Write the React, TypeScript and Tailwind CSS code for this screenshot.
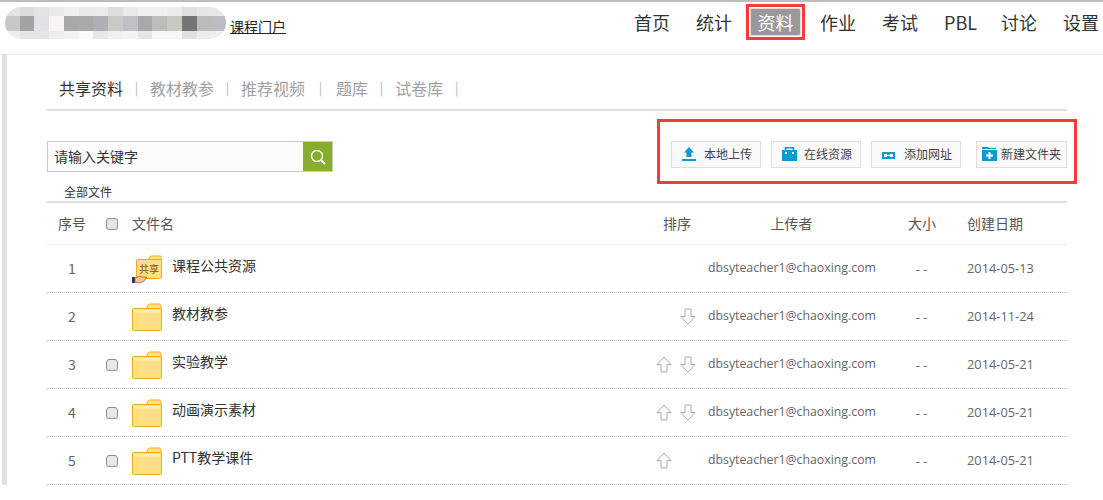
import React from 'react';

const FONT = "font-['Microsoft_YaHei','Noto_Sans_CJK_SC','Noto_Sans',sans-serif]";

const NAV = ['首页', '统计', '资料', '作业', '考试', 'PBL', '讨论', '设置'];

const LOGO_ROWS = [
  ['#e4e4e4', '#dcdcdc', '#e4e4e2', '#e9eaec', '#f0f0ee', '#eaeae8', '#ebebed', '#dedede', '#e8e9eb', '#f0f0f0', '#f0f0f0', '#ececec', '#e0e0e0', '#e6e6e6', '#e6e8e8'],
  ['#c8c8c6', '#a2a3a5', '#e2e2e4', '#f6f5f1', '#a8a8a6', '#a9a9a5', '#adb0b5', '#cac9c7', '#bfc1c4', '#a8aaa9', '#bcbcb8', '#c8c8c4', '#757575', '#bcbbb7', '#babdc0'],
  ['#eeeeee', '#e6e6e6', '#e5e5e3', '#eceeee', '#f2f2f2', '#fafbfb', '#e6e8e8', '#f0f0f0', '#f2f3f2', '#e5e5e5', '#f6f6f6', '#f6f6f6', '#e0e0e0', '#ececec', '#f0f0f0'],
];

const ROWS = [
  { no: 1, name: '课程公共资源', check: false, up: false, down: false, date: '2014-05-13', shared: true },
  { no: 2, name: '教材教参', check: false, up: false, down: true, date: '2014-11-24', shared: false },
  { no: 3, name: '实验教学', check: true, up: true, down: true, date: '2014-05-21', shared: false },
  { no: 4, name: '动画演示素材', check: true, up: true, down: true, date: '2014-05-21', shared: false },
  { no: 5, name: 'PTT教学课件', check: true, up: true, down: false, date: '2014-05-21', shared: false },
];

const Logo = () => (
  <div className="flex flex-col w-[221px] h-[32px] rounded-[16px] overflow-hidden">
    {LOGO_ROWS.map((row, i) => (
      <div key={i} className={i === 1 ? 'flex h-[15px]' : 'flex h-[8.5px]'}>
        {row.map((c, j) => (
          <div key={j} className="flex-1" style={{ backgroundColor: c }} />
        ))}
      </div>
    ))}
  </div>
);

const Folder = () => (
  <svg width="30" height="28" viewBox="0 0 30 28">
    <path d="M15 3.5 L17 1 H27.5 Q29 1 29 2.5 V6 H15 Z" fill="#ffe08a" stroke="#f0ad12" />
    <path d="M1.5 5.5 H28 Q29.5 5.5 29.5 7 V26 Q29.5 27.5 28 27.5 H2 Q0.5 27.5 0.5 26 V6.5 Q0.5 5.5 1.5 5.5 Z" fill="#ffdf85" stroke="#f0ad12" />
    <path d="M2 7 H28 V10 H2 Z" fill="#ffeaa8" />
  </svg>
);

const SharedFolder = () => (
  <div className="relative w-[30px] h-[28px]">
    <svg className="absolute left-[4px] top-0" width="26" height="24" viewBox="0 0 26 24">
      <path d="M13 3 L15 1 H24 Q25.5 1 25.5 2.5 V5 H13 Z" fill="#ffe08a" stroke="#f0ad12" />
      <path d="M1.5 4.5 H24.5 Q25.5 4.5 25.5 5.5 V22.5 Q25.5 23.5 24.5 23.5 H1.5 Q0.5 23.5 0.5 22.5 V5.5 Q0.5 4.5 1.5 4.5 Z" fill="#ffdf85" stroke="#f0ad12" />
    </svg>
    <span className="absolute left-[7px] top-[7px] text-[10px] leading-[14px] text-[#8a4a12]">共享</span>
    <svg className="absolute left-0 top-[20px]" width="16" height="9" viewBox="0 0 16 9">
      <rect x="0" y="2" width="3" height="6" fill="#2b3560" />
      <path d="M3 3 Q7 0 10 2 L15 2 Q12 8 7 8 L3 7 Z" fill="#f3c4a0" stroke="#b5562b" strokeWidth="0.8" />
    </svg>
  </div>
);

const ArrowUp = () => (
  <svg width="16" height="17" viewBox="0 0 16 17" fill="#fff" stroke="#aaaaaa" strokeWidth="1">
    <path d="M8 1 L15 8.5 H11 V16 H5 V8.5 H1 Z" />
  </svg>
);

const ArrowDown = () => (
  <svg width="16" height="17" viewBox="0 0 16 17" fill="#fff" stroke="#aaaaaa" strokeWidth="1">
    <path d="M5 1 H11 V8.5 H15 L8 16 L1 8.5 H5 Z" />
  </svg>
);

const Checkbox = () => (
  <span className="block w-[12px] h-[12px] rounded-[3px] border border-[#8f8f8f] bg-[#e6e6e6]" />
);

const UploadIcon = () => (
  <svg width="14" height="14" viewBox="0 0 14 14" fill="#0a9ccf">
    <path d="M7 0 L12 5.5 H9.5 V10 H4.5 V5.5 H2 Z" />
    <rect x="0" y="12" width="14" height="2" />
  </svg>
);

const BagIcon = () => (
  <svg width="15" height="14" viewBox="0 0 15 14">
    <path d="M0 3 H15 V14 H0 Z" fill="#0a9ccf" />
    <path d="M3.5 3 V0.8 H11.5 V3" fill="none" stroke="#0a9ccf" strokeWidth="1.6" />
    <rect x="3" y="5" width="2" height="2" fill="#fff" />
    <rect x="10" y="5" width="2" height="2" fill="#fff" />
  </svg>
);

const LinkIcon = () => (
  <svg className="mt-[3px]" width="13" height="7" viewBox="0 0 13 7">
    <rect width="13" height="7" fill="#0a9ccf" />
    <rect x="2" y="2" width="3" height="3" fill="#fff" />
    <rect x="8" y="2" width="3" height="3" fill="#fff" />
    <rect x="5" y="3" width="3" height="1" fill="#fff" />
  </svg>
);

const NewFolderIcon = () => (
  <svg width="15" height="14" viewBox="0 0 15 14" fill="#0a9ccf">
    <path d="M0 0 H6 L7 1 H14 V2 H0 Z" />
    <rect y="3" width="15" height="11" />
    <rect x="6.5" y="5" width="2" height="7" fill="#fff" />
    <rect x="4" y="7.5" width="7" height="2" fill="#fff" />
  </svg>
);

const ActionButton = ({ icon, label, className }: { icon: React.ReactNode; label: string; className: string }) => (
  <button className={`h-[27px] flex items-center border border-[#dedede] bg-[#fafafa] text-[12px] text-[#444] ${className}`}>
    {icon}
    <span>{label}</span>
  </button>
);

const App: React.FC = () => {
  return (
    <div className={`w-[1103px] h-[500px] overflow-hidden bg-white border-t-2 border-[#bdbdbd] ${FONT}`}>
      <header className="h-[53px] border-b border-[#e2e2e2] flex items-start pl-[5px]">
        <div className="mt-[5px]"><Logo /></div>
        <a className="mt-[15px] ml-[4px] text-[14px] leading-[18px] text-[#222] underline">课程门户</a>
        <nav className="ml-auto flex items-center h-[36px] mt-[2px] text-[18px] text-[#333] mr-[4px]">
          {NAV.map(item =>
            item === '资料' ? (
              <span key={item} className="w-[59px] h-[36px] border-[3px] border-[#f63b3b] flex items-center justify-center mr-[15px]">
                <span className="w-[51px] h-[28px] bg-[#999] border border-[#ddd] rounded-[2px] text-white leading-[26px] text-center">{item}</span>
              </span>
            ) : (
              <span
                key={item}
                className={item === '统计' ? 'mr-[14px]' : item === '设置' ? '' : item === 'PBL' ? 'w-[31px] mr-[26px] whitespace-nowrap' : 'mr-[26px]'}
              >
                {item}
              </span>
            ),
          )}
        </nav>
      </header>

      <main className="border-l-[5px] border-[#e2e2e2] ml-[2px] pl-[40px] w-[1020px] box-content">
        <div className="h-[56px] border-b-2 border-[#dcdcdc] flex items-center pt-[11px] pl-[12px] text-[16px] text-[#a0a0a0]">
          <span className="text-[#333]">共享资料</span>
          <span className="mx-[11.75px] text-[13px] text-[#b5b5b5]">|</span>
          <span>教材教参</span>
          <span className="mx-[11.75px] text-[13px] text-[#b5b5b5]">|</span>
          <span>推荐视频</span>
          <span className="mx-[13.75px] text-[13px] text-[#b5b5b5]">|</span>
          <span>题库</span>
          <span className="mx-[11.75px] text-[13px] text-[#b5b5b5]">|</span>
          <span>试卷库</span>
          <span className="mx-[11.75px] text-[13px] text-[#b5b5b5]">|</span>
        </div>

        <div className="flex justify-between items-start mt-[8px] h-[65px] mr-[-10px]">
          <div className="flex w-[286px] h-[31px] mt-[22px] border border-[#cccccc]">
            <div className="flex-1 bg-[#fcfcfc] text-[14px] leading-[29px] pl-[6px] text-[#333]">请输入关键字</div>
            <div className="w-[29px] bg-[#86ad2e] flex items-center justify-center">
              <svg width="18" height="18" viewBox="0 0 18 18" fill="none" stroke="#fff">
                <circle cx="8" cy="8" r="5.5" strokeWidth="1.4" />
                <path d="M12 12 L16 16" strokeWidth="2" />
              </svg>
            </div>
          </div>
          <div className="w-[420px] h-[65px] border-[3px] border-[#f63b3b] flex items-center pl-[11px] pt-[5px]">
            <ActionButton className="w-[90px] pl-[10px] gap-[8px]" icon={<UploadIcon />} label="本地上传" />
            <ActionButton className="w-[90px] ml-[10px] pl-[10px] gap-[7px]" icon={<BagIcon />} label="在线资源" />
            <ActionButton className="w-[90px] ml-[10px] pl-[10px] gap-[9px]" icon={<LinkIcon />} label="添加网址" />
            <ActionButton className="w-[91px] ml-[15px] pl-[5px] gap-[4px]" icon={<NewFolderIcon />} label="新建文件夹" />
          </div>
        </div>

        <div className="h-[17px] pl-[17px] text-[12px] leading-[15px] text-[#333]">全部文件</div>
        <div className="h-[44px] border-t-2 border-b border-t-[#dcdcdc] border-b-[#eeeeee] flex items-center text-[14px] text-[#555]">
          <span className="w-[50px] text-center">序号</span>
          <span className="w-[35px] pl-[9px] flex"><Checkbox /></span>
          <span className="w-[530px]">文件名</span>
          <span className="w-[30px] text-center">排序</span>
          <span className="w-[199px] text-center">上传者</span>
          <span className="w-[62px] text-center">大小</span>
          <span className="ml-[14px]">创建日期</span>
        </div>

        {ROWS.map(row => (
          <div key={row.no} className="h-[48px] border-b border-dotted border-[#bbbbbb] flex items-center text-[#666]">
            <span className="w-[50px] text-center text-[14px] mt-[-1px]">{row.no}</span>
            <span className="w-[35px] pl-[9px] flex">{row.check && <Checkbox />}</span>
            <span className="w-[40px] flex">{row.shared ? <SharedFolder /> : <Folder />}</span>
            <span className="w-[476px] text-[14px] text-[#333] mt-[-6px]">{row.name}</span>
            <span className="w-[48px] flex justify-end gap-[8px]">
              <span className="w-[16px] h-[17px]">{row.up && <ArrowUp />}</span>
              <span className="w-[16px] h-[17px]">{row.down && <ArrowDown />}</span>
            </span>
            <span className="w-[12px]" />
            <span className="w-[168px] text-[12.3px] font-['Open_Sans'] whitespace-nowrap">dbsyteacher1@chaoxing.com</span>
            <span className="w-[91px] text-center text-[13px]">- -</span>
            <span className="text-[12.8px] font-['Open_Sans']">{row.date}</span>
          </div>
        ))}
      </main>
    </div>
  );
};

export default App;
